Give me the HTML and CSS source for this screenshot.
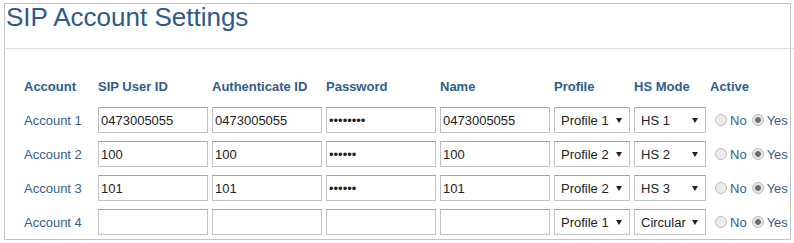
FILE: index.html
```html
<!DOCTYPE html>
<html lang="en">
<head>
  <meta charset="UTF-8" />
  <title>SIP Account Settings</title>
  <link rel="stylesheet" href="styles.css">
</head>
<body>

  <section class="panel">
    <h1 class="panel-title">SIP Account Settings</h1>
    <hr class="rule" />

    <div class="accounts">
      <!-- header -->
      <div class="row head">
        <span>Account</span>
        <span>SIP User ID</span>
        <span>Authenticate ID</span>
        <span>Password</span>
        <span>Name</span>
        <span>Profile</span>
        <span>HS Mode</span>
        <span>Active</span>
      </div>

      <div class="row">
        <span class="acc-label">Account 1</span>
        <input class="field" type="text" value="0473005055" />
        <input class="field" type="text" value="0473005055" />
        <input class="field" type="password" value="12345678" />
        <input class="field" type="text" value="0473005055" />
        <div class="select-wrap"><select><option selected>Profile 1</option><option>Profile 2</option></select></div>
        <div class="select-wrap"><select><option selected>HS 1</option><option>HS 2</option><option>HS 3</option><option>Circular</option></select></div>
        <div class="active-opts">
          <label><input type="radio" name="act1" /> No</label>
          <label><input type="radio" name="act1" checked /> Yes</label>
        </div>
      </div>

      <div class="row">
        <span class="acc-label">Account 2</span>
        <input class="field" type="text" value="100" />
        <input class="field" type="text" value="100" />
        <input class="field" type="password" value="123456" />
        <input class="field" type="text" value="100" />
        <div class="select-wrap"><select><option>Profile 1</option><option selected>Profile 2</option></select></div>
        <div class="select-wrap"><select><option>HS 1</option><option selected>HS 2</option><option>HS 3</option><option>Circular</option></select></div>
        <div class="active-opts">
          <label><input type="radio" name="act2" /> No</label>
          <label><input type="radio" name="act2" checked /> Yes</label>
        </div>
      </div>

      <div class="row">
        <span class="acc-label">Account 3</span>
        <input class="field" type="text" value="101" />
        <input class="field" type="text" value="101" />
        <input class="field" type="password" value="123456" />
        <input class="field" type="text" value="101" />
        <div class="select-wrap"><select><option>Profile 1</option><option selected>Profile 2</option></select></div>
        <div class="select-wrap"><select><option>HS 1</option><option>HS 2</option><option selected>HS 3</option><option>Circular</option></select></div>
        <div class="active-opts">
          <label><input type="radio" name="act3" /> No</label>
          <label><input type="radio" name="act3" checked /> Yes</label>
        </div>
      </div>

      <div class="row">
        <span class="acc-label">Account 4</span>
        <input class="field" type="text" value="" />
        <input class="field" type="text" value="" />
        <input class="field" type="password" value="" />
        <input class="field" type="text" value="" />
        <div class="select-wrap"><select><option selected>Profile 1</option><option>Profile 2</option></select></div>
        <div class="select-wrap"><select><option>HS 1</option><option>HS 2</option><option>HS 3</option><option selected>Circular</option></select></div>
        <div class="active-opts">
          <label><input type="radio" name="act4" /> No</label>
          <label><input type="radio" name="act4" checked /> Yes</label>
        </div>
      </div>
    </div>
  </section>

</body>
</html>
```

FILE: styles.css
```css
* {
  box-sizing: border-box;
}
body {
  margin: 0;
  padding: 3px 3px 0 4px;
  font-family: "Liberation Sans", Arial, sans-serif;
  font-size: 13px;
  background-color: #fff;
  color: #222;
}

/* outer box */
.panel {
  height: 237px;
  border: 1px solid #c4c4c4;
  padding: 1px 0 0 1px;
}

.panel-title {
  margin: 0;
  font-size: 26px;
  font-weight: normal;
  line-height: 24px;
  color: #2d5b8e;
}

.rule {
  margin: 19px -4px 30px 0;
  border: none;
  border-top: 1px solid #dcdcdc;
  height: 0;
}

/* table of accounts */
.accounts {
  display: flex;
  flex-direction: column;
  gap: 8px;
  padding-left: 18px;
}

.row {
  display: grid;
  grid-template-columns: 70px 110px 110px 110px 110px 76px 72px auto;
  column-gap: 4px;
  align-items: center;
}

.row.head {
  line-height: 16px;
  padding-bottom: 4px;
  font-weight: bold;
  color: #2f5c8d;
}

.acc-label {
  color: #33608f;
}

.field {
  height: 26px;
  width: 110px;
  margin: 0;
  padding: 0 2px;
  border: 1px solid #c2c2c2;
  border-top-color: #a4a4a4;
  border-radius: 0;
  background: #fff;
  font-family: inherit;
  font-size: 13px;
  color: #222;
  outline: none;
}

/* select with small arrow */
.select-wrap {
  position: relative;
}
.select-wrap select {
  -webkit-appearance: none;
  appearance: none;
  width: 100%;
  height: 26px;
  margin: 0;
  padding: 0 0 0 6px;
  border: 1px solid #c2c2c2;
  border-top-color: #a4a4a4;
  border-radius: 0;
  background: #fff;
  font-family: inherit;
  font-size: 13px;
  color: #222;
  outline: none;
}
.select-wrap::after {
  content: "";
  position: absolute;
  right: 8px;
  top: 11px;
  border-left: 3px solid transparent;
  border-right: 3px solid transparent;
  border-top: 5px solid #222;
  pointer-events: none;
}

/* radio No / Yes */
.active-opts {
  display: flex;
  align-items: center;
  gap: 5px;
  padding-left: 5px;
  color: #33608f;
}
.active-opts label {
  display: flex;
  align-items: center;
  gap: 2px;
  white-space: nowrap;
}
.active-opts input[type="radio"] {
  -webkit-appearance: none;
  appearance: none;
  width: 12px;
  height: 12px;
  margin: 0 1px 0 0;
  border: 1px solid #bdbdbd;
  border-radius: 50%;
  background: #ececec;
}
.active-opts input[type="radio"]:checked {
  background: radial-gradient(circle, #6c6c6c 0, #6c6c6c 2.5px, #e4e4e4 3.2px);
}
```
